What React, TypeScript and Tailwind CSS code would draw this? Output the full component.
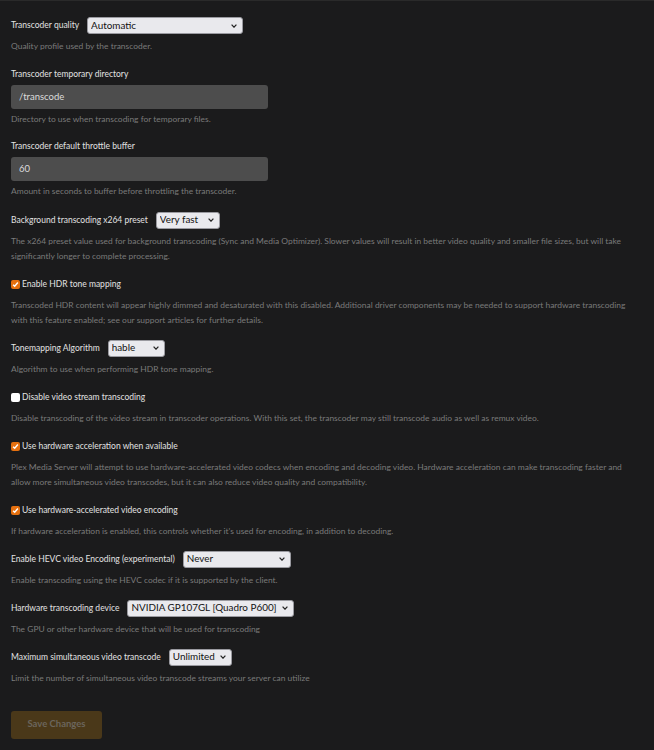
import { useState } from "react";

type Field =
  | { kind: "select"; label: string; value: string; options: string[]; width: string; help: string[] }
  | { kind: "input"; label: string; value: string; help: string[] }
  | { kind: "check"; label: string; checked: boolean; help: string[] };

const fields: Field[] = [
  {
    kind: "select",
    label: "Transcoder quality",
    value: "Automatic",
    options: ["Automatic", "Prefer higher speed encoding", "Prefer higher quality encoding", "Make my CPU hurt"],
    width: "w-[156px]",
    help: ["Quality profile used by the transcoder."],
  },
  {
    kind: "input",
    label: "Transcoder temporary directory",
    value: "/transcode",
    help: ["Directory to use when transcoding for temporary files."],
  },
  {
    kind: "input",
    label: "Transcoder default throttle buffer",
    value: "60",
    help: ["Amount in seconds to buffer before throttling the transcoder."],
  },
  {
    kind: "select",
    label: "Background transcoding x264 preset",
    value: "Very fast",
    options: ["Ultra fast", "Super fast", "Very fast", "Faster", "Fast", "Medium", "Slow", "Slower", "Very slow"],
    width: "w-[64px]",
    help: [
      "The x264 preset value used for background transcoding (Sync and Media Optimizer). Slower values will result in better video quality and smaller file sizes, but will take",
      "significantly longer to complete processing.",
    ],
  },
  {
    kind: "check",
    label: "Enable HDR tone mapping",
    checked: true,
    help: [
      "Transcoded HDR content will appear highly dimmed and desaturated with this disabled. Additional driver components may be needed to support hardware transcoding",
      "with this feature enabled; see our support articles for further details.",
    ],
  },
  {
    kind: "select",
    label: "Tonemapping Algorithm",
    value: "hable",
    options: ["hable", "mobius", "reinhard", "clip", "linear", "gamma"],
    width: "w-[57px]",
    help: ["Algorithm to use when performing HDR tone mapping."],
  },
  {
    kind: "check",
    label: "Disable video stream transcoding",
    checked: false,
    help: [
      "Disable transcoding of the video stream in transcoder operations. With this set, the transcoder may still transcode audio as well as remux video.",
    ],
  },
  {
    kind: "check",
    label: "Use hardware acceleration when available",
    checked: true,
    help: [
      "Plex Media Server will attempt to use hardware-accelerated video codecs when encoding and decoding video. Hardware acceleration can make transcoding faster and",
      "allow more simultaneous video transcodes, but it can also reduce video quality and compatibility.",
    ],
  },
  {
    kind: "check",
    label: "Use hardware-accelerated video encoding",
    checked: true,
    help: ["If hardware acceleration is enabled, this controls whether it's used for encoding, in addition to decoding."],
  },
  {
    kind: "select",
    label: "Enable HEVC video Encoding (experimental)",
    value: "Never",
    options: ["Never", "HEVC sources only", "Always"],
    width: "w-[108px]",
    help: ["Enable transcoding using the HEVC codec if it is supported by the client."],
  },
  {
    kind: "select",
    label: "Hardware transcoding device",
    value: "NVIDIA GP107GL [Quadro P600]",
    options: ["Auto", "NVIDIA GP107GL [Quadro P600]"],
    width: "w-[167px]",
    help: ["The GPU or other hardware device that will be used for transcoding"],
  },
  {
    kind: "select",
    label: "Maximum simultaneous video transcode",
    value: "Unlimited",
    options: ["Unlimited", "1", "2", "3", "4", "5", "10", "20"],
    width: "w-[63px]",
    help: ["Limit the number of simultaneous video transcode streams your server can utilize"],
  },
];

function Chevron() {
  return (
    <svg
      className="pointer-events-none absolute right-[6px] top-1/2 -translate-y-1/2"
      width="6"
      height="4"
      viewBox="0 0 6 4"
      fill="none"
      stroke="#222"
      strokeWidth="1.2"
    >
      <path d="M0.6 0.6 3 3.2 5.4 0.6" />
    </svg>
  );
}

function Select({ value, options, width }: { value: string; options: string[]; width: string }) {
  const [v, setV] = useState(value);
  return (
    <div className={`relative ${width} h-[17px]`}>
      <select
        value={v}
        onChange={(e) => setV(e.target.value)}
        className="h-full w-full appearance-none rounded-[3px] border border-[#9a9aa0] bg-[#e9e9ed] pl-[3px] pr-3 text-[9.9px] leading-none text-[#111] outline-none"
      >
        {options.map((o) => (
          <option key={o}>{o}</option>
        ))}
      </select>
      <Chevron />
    </div>
  );
}

function Checkbox({ checked }: { checked: boolean }) {
  const [on, setOn] = useState(checked);
  return (
    <button
      type="button"
      onClick={() => setOn(!on)}
      className={`mr-[2px] flex size-[9px] items-center justify-center rounded-[2px] ${
        on ? "bg-[#e5700f]" : "bg-white"
      }`}
    >
      {on && (
        <svg width="7" height="7" viewBox="0 0 8 8" fill="none" stroke="white" strokeWidth="1.7">
          <path d="M1.3 4.2 3.1 6 6.7 1.8" />
        </svg>
      )}
    </button>
  );
}

function Help({ lines, gap }: { lines: string[]; gap: string }) {
  return (
    <p className={`${gap} text-[8.45px] leading-[15px] text-[#7a7a7a]`}>
      {lines.map((l, i) => (
        <span key={i} className="block whitespace-nowrap">
          {l}
        </span>
      ))}
    </p>
  );
}

export default function App() {
  return (
    <div className="min-h-[750px] border-t border-[#2a2a2a] bg-[#1b1b1c] pl-[11px] pt-[16px] font-['Lato',sans-serif]">
      {fields.map((f, i) => (
        <div key={f.label} className={f.kind === "input" ? (i === 2 ? "mb-[12.5px]" : "mb-[11px]") : "mb-[12px]"}>
          {f.kind === "input" ? (
            <>
              <div className="flex h-[17px] items-center text-[8.5px] text-[#e2e2e2]">{f.label}</div>
              <input
                defaultValue={f.value}
                className="mt-[1.5px] block h-[24.5px] w-[257px] rounded-[3px] bg-[#4d4d4d] px-[8px] text-[9.5px] text-[#dcdcdc] outline-none"
              />
              <Help lines={f.help} gap="mt-[3px]" />
            </>
          ) : (
            <>
              <div className="flex h-[17px] items-center text-[8.5px] text-[#e2e2e2]">
                {f.kind === "check" && <Checkbox checked={f.checked} />}
                <span className={f.kind === "select" ? "mr-2" : ""}>{f.label}</span>
                {f.kind === "select" && <Select value={f.value} options={f.options} width={f.width} />}
              </div>
              <Help lines={f.help} gap="mt-[5px]" />
            </>
          )}
        </div>
      ))}
      <button
        type="button"
        className="mt-[13px] h-[28px] w-[91px] rounded-[3px] bg-[#4a3819] text-[9.5px] font-bold text-[#6b655c]"
      >
        Save Changes
      </button>
    </div>
  );
}
